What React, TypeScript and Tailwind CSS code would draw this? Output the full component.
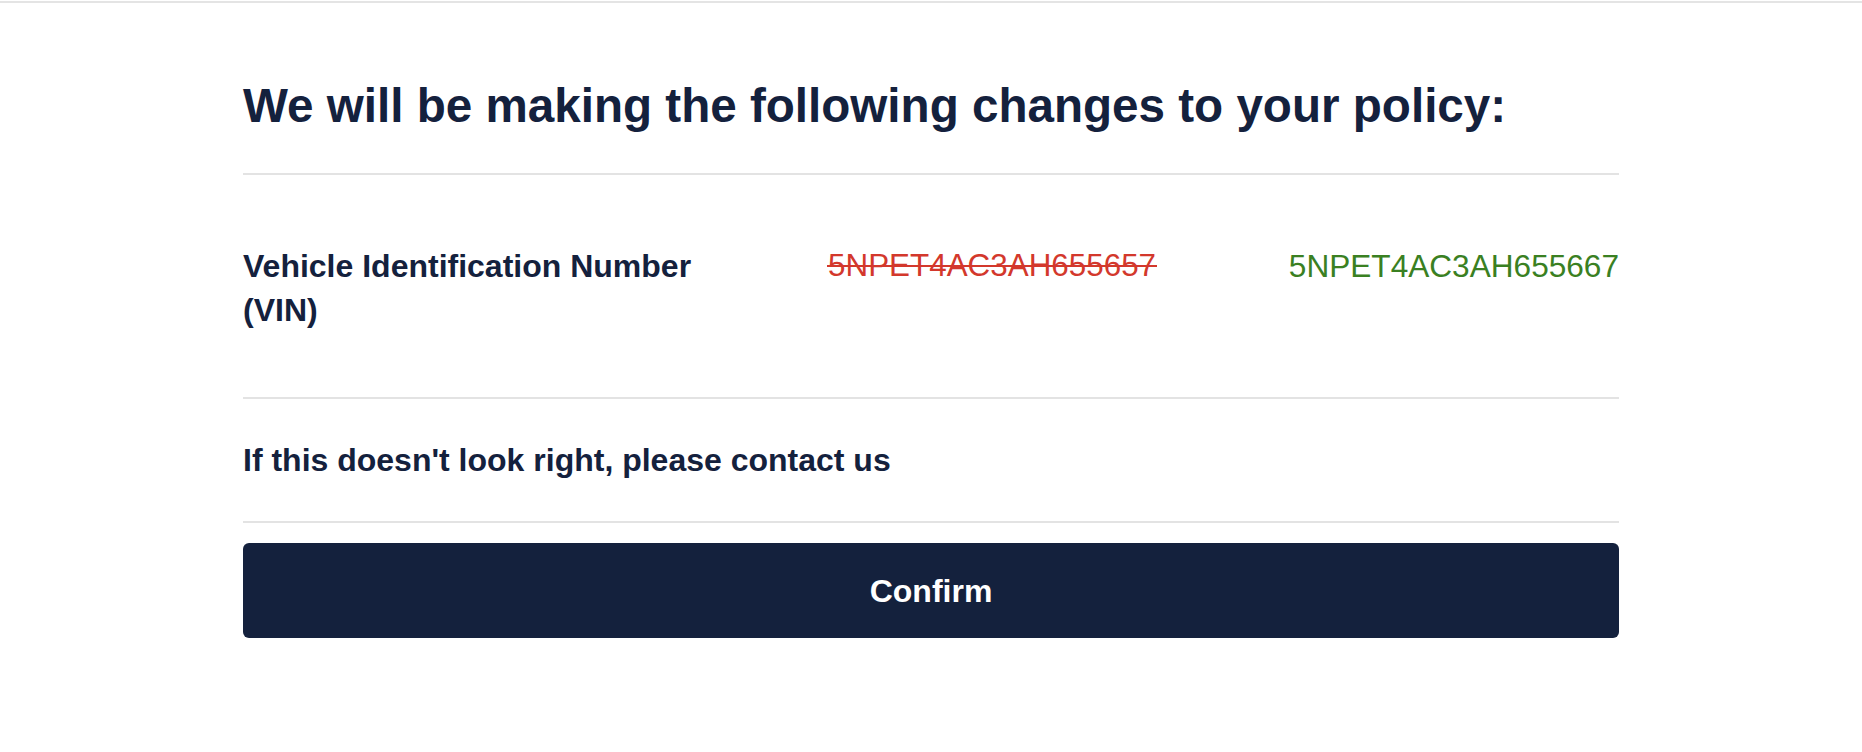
import React from "react";

const font = { fontFamily: '"Helvetica Neue", Helvetica, "Liberation Sans", Arial, sans-serif' };

export default function App() {
  return (
    <div className="min-h-screen bg-white" style={font}>
      <div className="h-px bg-white" />
      <div className="h-[2px] bg-[#e4e4e4]" />
      <div className="mx-auto w-[1376px] pt-[75px]">
        <h1 className="text-[47.6px] font-bold leading-[55px] text-[#14213d]">
          We will be making the following changes to your policy:
        </h1>
        <div className="mt-[40px] h-[2px] bg-[#e3e3e3]" />
        <div className="grid grid-cols-[585px_1fr_auto] items-start pt-[69px] pb-[65px] leading-[44px]">
          <div className="max-w-[490px] text-[32px] font-bold text-[#14213d]">
            Vehicle Identification Number (VIN)
          </div>
          <div>
            <span className="relative inline-block text-[31.4px] text-[#d3382c]">
              5NPET4AC3AH655657
              <span className="absolute left-[-1px] right-[-1px] top-[21px] h-[2px] bg-[#d3382c]" />
            </span>
          </div>
          <div className="text-right text-[31.6px] text-[#3a8022]">5NPET4AC3AH655667</div>
        </div>
        <div className="h-[2px] bg-[#e3e3e3]" />
        <div className="py-[41px] text-[32px] font-bold leading-[40px] text-[#14213d]">
          If this doesn't look right, please contact us
        </div>
        <div className="h-[2px] bg-[#e3e3e3]" />
        <button className="mt-[20px] flex h-[95px] w-full items-center justify-center rounded-[6px] bg-[#14213d] text-[32px] font-bold text-white">
          Confirm
        </button>
      </div>
    </div>
  );
}
